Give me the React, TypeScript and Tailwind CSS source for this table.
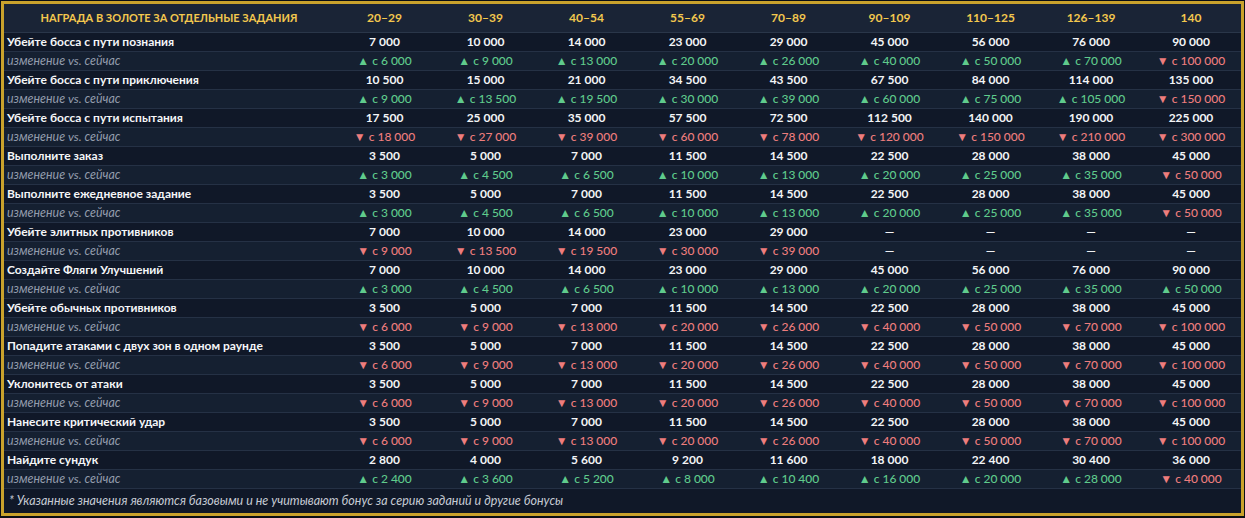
import React from "react";

type Dir = "up" | "down" | "none";
type Row = { label: string; values: string[]; changes: [Dir, string][] };

const cols = ["20–29", "30–39", "40–54", "55–69", "70–89", "90–109", "110–125", "126–139", "140"];

const U = (v: string): [Dir, string] => ["up", v];
const D = (v: string): [Dir, string] => ["down", v];
const N: [Dir, string] = ["none", "—"];

const v1 = ["3 500", "5 000", "7 000", "11 500", "14 500", "22 500", "28 000", "38 000", "45 000"];
const cOrder: [Dir, string][] = [U("3 000"), U("4 500"), U("6 500"), U("10 000"), U("13 000"), U("20 000"), U("25 000"), U("35 000"), D("50 000")];
const cNorm: [Dir, string][] = [D("6 000"), D("9 000"), D("13 000"), D("20 000"), D("26 000"), D("40 000"), D("50 000"), D("70 000"), D("100 000")];

const rows: Row[] = [
  {
    label: "Убейте босса с пути познания",
    values: ["7 000", "10 000", "14 000", "23 000", "29 000", "45 000", "56 000", "76 000", "90 000"],
    changes: [U("6 000"), U("9 000"), U("13 000"), U("20 000"), U("26 000"), U("40 000"), U("50 000"), U("70 000"), D("100 000")],
  },
  {
    label: "Убейте босса с пути приключения",
    values: ["10 500", "15 000", "21 000", "34 500", "43 500", "67 500", "84 000", "114 000", "135 000"],
    changes: [U("9 000"), U("13 500"), U("19 500"), U("30 000"), U("39 000"), U("60 000"), U("75 000"), U("105 000"), D("150 000")],
  },
  {
    label: "Убейте босса с пути испытания",
    values: ["17 500", "25 000", "35 000", "57 500", "72 500", "112 500", "140 000", "190 000", "225 000"],
    changes: [D("18 000"), D("27 000"), D("39 000"), D("60 000"), D("78 000"), D("120 000"), D("150 000"), D("210 000"), D("300 000")],
  },
  { label: "Выполните заказ", values: v1, changes: cOrder },
  { label: "Выполните ежедневное задание", values: v1, changes: cOrder },
  {
    label: "Убейте элитных противников",
    values: ["7 000", "10 000", "14 000", "23 000", "29 000", "—", "—", "—", "—"],
    changes: [D("9 000"), D("13 500"), D("19 500"), D("30 000"), D("39 000"), N, N, N, N],
  },
  {
    label: "Создайте Фляги Улучшений",
    values: ["7 000", "10 000", "14 000", "23 000", "29 000", "45 000", "56 000", "76 000", "90 000"],
    changes: [U("3 000"), U("4 500"), U("6 500"), U("10 000"), U("13 000"), U("20 000"), U("25 000"), U("35 000"), U("50 000")],
  },
  { label: "Убейте обычных противников", values: v1, changes: cNorm },
  { label: "Попадите атаками с двух зон в одном раунде", values: v1, changes: cNorm },
  { label: "Уклонитесь от атаки", values: v1, changes: cNorm },
  { label: "Нанесите критический удар", values: v1, changes: cNorm },
  {
    label: "Найдите сундук",
    values: ["2 800", "4 000", "5 600", "9 200", "11 600", "18 000", "22 400", "30 400", "36 000"],
    changes: [U("2 400"), U("3 600"), U("5 200"), U("8 000"), U("10 400"), U("16 000"), U("20 000"), U("28 000"), D("40 000")],
  },
];

const grid =
  "grid grid-cols-[330px_101px_101px_101px_101px_101px_101px_101px_100px_100px]";

function Change({ d, v }: { d: Dir; v: string }) {
  if (d === "none") return <span className="font-bold text-[#eef0f3]">—</span>;
  if (d === "up")
    return <span className="text-[#5fcb8c] font-medium">▲ с {v}</span>;
  return <span className="text-[#ee7d7d] font-medium">▼ с {v}</span>;
}

export default function App() {
  return (
    <div
      className="w-[1245px] h-[518px] bg-[#0a0e15] pt-px pl-px"
      style={{ fontFamily: "Lato, 'Noto Sans', sans-serif" }}
    >
      <div className="w-[1243px] h-[515px] border-[3px] border-[#c9a22c] bg-[#101828] flex flex-col">
        <div className={`${grid} h-[29px] bg-[#1a2436] border-b border-[#2a3649] items-center text-[12px] font-bold text-[#f3c84e]`}>
          <div className="text-center text-[11px]">НАГРАДА В ЗОЛОТЕ ЗА ОТДЕЛЬНЫЕ ЗАДАНИЯ</div>
          {cols.map((c) => (
            <div key={c} className="text-center">
              {c}
            </div>
          ))}
        </div>
        {rows.map((r) => (
          <React.Fragment key={r.label}>
            <div className={`${grid} h-[19px] bg-[#101828] border-b border-[#253145] items-center text-[12px] leading-none`}>
              <div className="pl-[3px] font-bold text-[#f5f6f8] whitespace-nowrap">{r.label}</div>
              {r.values.map((v, i) => (
                <div key={i} className="text-center font-bold text-[#f3f4f6]">
                  {v}
                </div>
              ))}
            </div>
            <div className={`${grid} h-[19px] bg-[#152031] border-b border-[#253145] items-center text-[12px] leading-none`}>
              <div className="pl-[3px] italic text-[12.4px] text-[#939cac]">изменение vs. сейчас</div>
              {r.changes.map(([d, v], i) => (
                <div key={i} className="text-center">
                  <Change d={d} v={v} />
                </div>
              ))}
            </div>
          </React.Fragment>
        ))}
        <div className="flex-1 flex items-center pl-[5px] text-[12.5px] italic text-[#c6cbd4] bg-[#101828]">
          * Указанные значения являются базовыми и не учитывают бонус за серию заданий и другие бонусы
        </div>
      </div>
    </div>
  );
}
